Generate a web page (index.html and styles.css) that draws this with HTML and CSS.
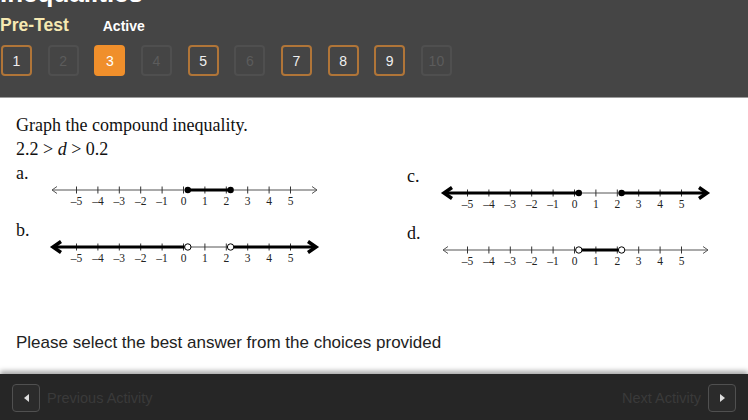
FILE: index.html
```html
<!DOCTYPE html>
<html lang="en">
<head>
  <meta charset="UTF-8">
  <meta name="viewport" content="width=device-width, initial-scale=1.0">
  <title>Inequalities - Pre-Test</title>
  <link rel="stylesheet" href="styles.css">
</head>
<body>
  <header class="top">
    <h1 class="title">Inequalities</h1>
    <div class="status">
      <span class="mode">Pre-Test</span>
      <span class="state">Active</span>
    </div>
    <nav class="pager">
      <span class="page done">1</span>
      <span class="page off">2</span>
      <span class="page current">3</span>
      <span class="page off">4</span>
      <span class="page done">5</span>
      <span class="page off">6</span>
      <span class="page done">7</span>
      <span class="page done">8</span>
      <span class="page done">9</span>
      <span class="page off">10</span>
    </nav>
  </header>

  <main class="content">
    <div class="question">
      <p>Graph the compound inequality.</p>
      <p>2.2 &gt; <i>d</i> &gt; 0.2</p>
    </div>

    <div class="choices">
      <!-- a -->
      <div class="choice">
        <div class="choice-label">a.</div>
        <svg class="numline" width="280" height="26" viewBox="0 0 280 26">
          <path class="axis" d="M6 9H271"/>
          <path class="arrow-thin" d="M11 5.5L6 9L11 12.5M266 5.5L271 9L266 12.5"/>
          <path class="ticks" d="M30.5 5.5v7M51.9 5.5v7M73.3 5.5v7M94.7 5.5v7M116.1 5.5v7M137.5 5.5v7M158.9 5.5v7M180.3 5.5v7M201.7 5.5v7M223.1 5.5v7M244.5 5.5v7"/>
          <path class="thick" d="M141.8 9H184.6"/>
          <circle class="dot" cx="141.8" cy="9" r="3.2"/>
          <circle class="dot" cx="184.6" cy="9" r="3.2"/>
          <g class="nums">
            <text x="30.5" y="24">–5</text><text x="51.9" y="24">–4</text><text x="73.3" y="24">–3</text><text x="94.7" y="24">–2</text><text x="116.1" y="24">–1</text><text x="137.5" y="24">0</text><text x="158.9" y="24">1</text><text x="180.3" y="24">2</text><text x="201.7" y="24">3</text><text x="223.1" y="24">4</text><text x="244.5" y="24">5</text>
          </g>
        </svg>
      </div>

      <!-- c -->
      <div class="choice right">
        <div class="choice-label">c.</div>
        <svg class="numline" width="280" height="26" viewBox="0 0 280 26">
          <path class="axis" d="M6 9H271"/>
          <path class="ticks" d="M30.5 5.5v7M51.9 5.5v7M73.3 5.5v7M94.7 5.5v7M116.1 5.5v7M137.5 5.5v7M158.9 5.5v7M180.3 5.5v7M201.7 5.5v7M223.1 5.5v7M244.5 5.5v7"/>
          <path class="thick" d="M9 9H141.8M184.6 9H268"/>
          <path class="arrow-thick" d="M15 3.5L7 9L15 14.5M262 3.5L270 9L262 14.5"/>
          <circle class="dot" cx="141.8" cy="9" r="3.2"/>
          <circle class="dot" cx="184.6" cy="9" r="3.2"/>
          <g class="nums">
            <text x="30.5" y="24">–5</text><text x="51.9" y="24">–4</text><text x="73.3" y="24">–3</text><text x="94.7" y="24">–2</text><text x="116.1" y="24">–1</text><text x="137.5" y="24">0</text><text x="158.9" y="24">1</text><text x="180.3" y="24">2</text><text x="201.7" y="24">3</text><text x="223.1" y="24">4</text><text x="244.5" y="24">5</text>
          </g>
        </svg>
      </div>

      <!-- b -->
      <div class="choice">
        <div class="choice-label">b.</div>
        <svg class="numline" width="280" height="26" viewBox="0 0 280 26">
          <path class="axis" d="M6 9H271"/>
          <path class="ticks" d="M30.5 5.5v7M51.9 5.5v7M73.3 5.5v7M94.7 5.5v7M116.1 5.5v7M137.5 5.5v7M158.9 5.5v7M180.3 5.5v7M201.7 5.5v7M223.1 5.5v7M244.5 5.5v7"/>
          <path class="thick" d="M9 9H138.6M187.8 9H268"/>
          <path class="arrow-thick" d="M15 3.5L7 9L15 14.5M262 3.5L270 9L262 14.5"/>
          <circle class="ring" cx="141.8" cy="9" r="3.2"/>
          <circle class="ring" cx="184.6" cy="9" r="3.2"/>
          <g class="nums">
            <text x="30.5" y="24">–5</text><text x="51.9" y="24">–4</text><text x="73.3" y="24">–3</text><text x="94.7" y="24">–2</text><text x="116.1" y="24">–1</text><text x="137.5" y="24">0</text><text x="158.9" y="24">1</text><text x="180.3" y="24">2</text><text x="201.7" y="24">3</text><text x="223.1" y="24">4</text><text x="244.5" y="24">5</text>
          </g>
        </svg>
      </div>

      <!-- d -->
      <div class="choice right">
        <div class="choice-label">d.</div>
        <svg class="numline" width="280" height="26" viewBox="0 0 280 26">
          <path class="axis" d="M6 9H271"/>
          <path class="arrow-thin" d="M11 5.5L6 9L11 12.5M266 5.5L271 9L266 12.5"/>
          <path class="ticks" d="M30.5 5.5v7M51.9 5.5v7M73.3 5.5v7M94.7 5.5v7M116.1 5.5v7M137.5 5.5v7M158.9 5.5v7M180.3 5.5v7M201.7 5.5v7M223.1 5.5v7M244.5 5.5v7"/>
          <path class="thick" d="M145 9H181.4"/>
          <circle class="ring" cx="141.8" cy="9" r="3.2"/>
          <circle class="ring" cx="184.6" cy="9" r="3.2"/>
          <g class="nums">
            <text x="30.5" y="24">–5</text><text x="51.9" y="24">–4</text><text x="73.3" y="24">–3</text><text x="94.7" y="24">–2</text><text x="116.1" y="24">–1</text><text x="137.5" y="24">0</text><text x="158.9" y="24">1</text><text x="180.3" y="24">2</text><text x="201.7" y="24">3</text><text x="223.1" y="24">4</text><text x="244.5" y="24">5</text>
          </g>
        </svg>
      </div>
    </div>

    <p class="prompt">Please select the best answer from the choices provided</p>
  </main>

  <footer class="bottom">
    <div class="nav-item">
      <span class="nav-btn"><span class="tri left"></span></span>
      <span class="nav-text">Previous Activity</span>
    </div>
    <div class="nav-item">
      <span class="nav-text">Next Activity</span>
      <span class="nav-btn"><span class="tri right"></span></span>
    </div>
  </footer>
</body>
</html>
```

FILE: styles.css
```css
html, body {
  margin: 0;
  height: 100%;
}

body {
  width: 748px;
  height: 420px;
  overflow: hidden;
  display: flex;
  flex-direction: column;
  font-family: "Liberation Sans", Arial, sans-serif;
  background: #fff;
}

/* header */
.top {
  background: #454545;
  height: 97px;
  border-bottom: 1px solid #9c9c9c;
  overflow: hidden;
  flex-shrink: 0;
}

.title {
  margin: -20px 0 0;
  font-size: 26px;
  line-height: 26px;
  font-weight: bold;
  color: #fff;
}

.status {
  display: flex;
  align-items: baseline;
  margin-top: 9px;
  height: 20px;
  line-height: 20px;
  font-weight: bold;
}

.mode {
  font-size: 17.5px;
  color: #f6e9b2;
}

.state {
  margin-left: 34px;
  font-size: 14px;
  color: #fff;
}

.pager {
  display: flex;
  gap: 15.67px;
  margin-top: 10px;
  padding-left: 1px;
}

.page {
  box-sizing: border-box;
  width: 31px;
  height: 31px;
  border: 2px solid #b07538;
  border-radius: 4px;
  display: flex;
  align-items: center;
  justify-content: center;
  font-size: 14px;
  color: #f0f0f0;
}

.page.off {
  border-color: #4f4f4f;
  color: #5c5c5c;
}

.page.current {
  background: #f08f2b;
  border-color: #f08f2b;
  color: #fff;
}

/* question */
.content {
  flex: 1;
  padding: 15px 16px 0;
}

.question p {
  margin: 0;
  font-family: "Liberation Serif", "Times New Roman", serif;
  font-size: 18px;
  line-height: 24px;
  color: #111;
}

.choices {
  display: grid;
  grid-template-columns: 391px 1fr;
}

.choice {
  margin-bottom: 8px;
}

.choice-label {
  font-family: "Liberation Serif", "Times New Roman", serif;
  font-size: 18px;
  line-height: 24px;
  color: #111;
}

.choice.right .choice-label {
  padding-top: 3px;
  margin-bottom: -3px;
}

.numline {
  display: block;
  margin: -4px 0 0 30px;
}

.axis {
  stroke: #555;
  stroke-width: 1;
  fill: none;
}

.ticks {
  stroke: #333;
  stroke-width: 1;
  fill: none;
}

.arrow-thin {
  stroke: #555;
  stroke-width: 1;
  fill: none;
}

.thick {
  stroke: #000;
  stroke-width: 3;
  fill: none;
}

.arrow-thick {
  stroke: #000;
  stroke-width: 3.5;
  fill: none;
}

.dot {
  fill: #000;
}

.ring {
  fill: #fff;
  stroke: #000;
  stroke-width: 1;
}

.nums text {
  font-family: "Liberation Serif", "Times New Roman", serif;
  font-size: 11.5px;
  fill: #222;
  text-anchor: middle;
}

.prompt {
  margin: 58px 0 0;
  font-size: 17px;
  line-height: 20px;
  color: #222;
}

/* footer */
.bottom {
  flex-shrink: 0;
  height: 46px;
  box-sizing: border-box;
  padding: 10px 12px 8px;
  background: #262626;
  box-shadow: 0 -3px 5px rgba(0, 0, 0, 0.35);
  display: flex;
  justify-content: space-between;
  align-items: center;
}

.nav-item {
  display: flex;
  align-items: center;
  gap: 7px;
}

.nav-btn {
  box-sizing: border-box;
  width: 28px;
  height: 28px;
  border: 1px solid #505050;
  border-radius: 4px;
  background: #2b2b2b;
  display: flex;
  align-items: center;
  justify-content: center;
}

.tri {
  width: 0;
  height: 0;
  border-top: 4px solid transparent;
  border-bottom: 4px solid transparent;
}

.tri.left {
  border-right: 5px solid #ddd;
}

.tri.right {
  border-left: 5px solid #ddd;
}

.nav-text {
  font-size: 14.5px;
  color: #3a3a3a;
}
```
